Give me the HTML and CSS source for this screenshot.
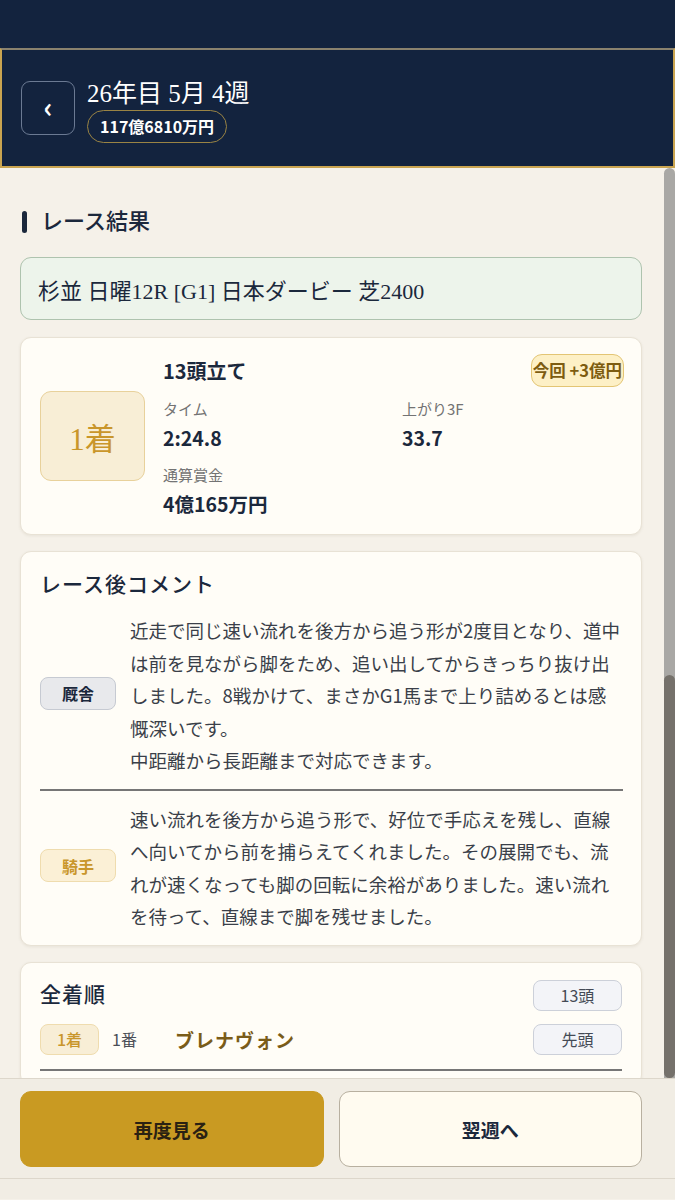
FILE: index.html
```html
<!doctype html>
<html lang="ja">
  <head>
    <meta charset="utf-8">
    <title>レース結果</title>
    <link rel="stylesheet" href="styles.css">
  </head>
  <body>
    <div class="statusbar"></div>

    <header class="topbar">
      <button class="back">‹</button>
      <div class="week">
        <h1>26年目 5月 4週</h1>
        <span class="money">117億6810万円</span>
      </div>
    </header>

    <div class="viewport">
      <main class="scroll">
        <h2 class="section">レース結果</h2>

        <div class="race-name">杉並 日曜12R [G1] 日本ダービー 芝2400</div>

        <section class="card result">
          <div class="rank">1着</div>
          <div class="stats">
            <div class="stats-head">
              <span class="field-size">13頭立て</span>
              <span class="gain">今回 +3億円</span>
            </div>
            <dl class="grid">
              <div><dt>タイム</dt><dd>2:24.8</dd></div>
              <div><dt>上がり3F</dt><dd>33.7</dd></div>
              <div><dt>通算賞金</dt><dd>4億165万円</dd></div>
            </dl>
          </div>
        </section>

        <section class="card comments">
          <h3>レース後コメント</h3>
          <div class="comment">
            <span class="tag stable">厩舎</span>
            <p>近走で同じ速い流れを後方から追う形が2度目となり、道中は前を見ながら脚をため、追い出してからきっちり抜け出しました。8戦かけて、まさかG1馬まで上り詰めるとは感慨深いです。<br>中距離から長距離まで対応できます。</p>
          </div>
          <div class="comment">
            <span class="tag jockey">騎手</span>
            <p>速い流れを後方から追う形で、好位で手応えを残し、直線へ向いてから前を捕らえてくれました。その展開でも、流れが速くなっても脚の回転に余裕がありました。速い流れを待って、直線まで脚を残せました。</p>
          </div>
        </section>

        <section class="card order">
          <div class="order-head">
            <h3>全着順</h3>
            <span class="chip">13頭</span>
          </div>
          <div class="order-row">
            <span class="place">1着</span>
            <span class="num">1番</span>
            <span class="horse">ブレナヴォン</span>
            <span class="chip">先頭</span>
          </div>
        </section>
      </main>
      <div class="scrollbar"><div class="thumb"></div></div>
    </div>

    <footer class="actions">
      <button class="btn primary">再度見る</button>
      <button class="btn">翌週へ</button>
    </footer>
    <div class="home-area"></div>
  </body>
</html>
```

FILE: styles.css
```css
html {
    font-family: "Noto Sans CJK JP", sans-serif;
    color: #1b283c;
    background-color: #f5f1e9;
}

body, h1, h2, h3, p, dl, dd { margin: 0 }

button {
    font: inherit;
    cursor: pointer;
}

.statusbar {
    height: 48px;
    background-color: #13233e;
}

.topbar {
    height: 120px;
    box-sizing: border-box;
    display: flex;
    align-items: center;
    gap: 12px;
    padding: 0 19px;
    background-color: #13233e;
    border: 2px solid #c9a450;
    border-top-color: #8a826e;
}

.back {
    width: 54px;
    height: 54px;
    border: 1px solid #6b7a93;
    border-radius: 9px;
    background: transparent;
    color: #fff;
    font-size: 28px;
    font-weight: 700;
    line-height: 1;
    padding: 0 0 4px;
}

.week {
    display: flex;
    flex-direction: column;
    align-items: flex-start;
    gap: 1px;
    margin-top: 6px;
}

.week h1 {
    font-family: "Liberation Serif", "Noto Sans CJK JP", serif;
    font-weight: 400;
    font-size: 25px;
    line-height: 30px;
    color: #fff;
}

.money {
    height: 33px;
    box-sizing: border-box;
    padding: 0 12px;
    border: 1.5px solid #9a8444;
    border-radius: 17px;
    color: #fff;
    font-size: 16px;
    font-weight: 700;
    line-height: 30px;
}

.viewport {
    height: 910px;
    display: flex;
}

.scroll {
    flex: 1;
    overflow: hidden;
    padding: 0 22px 0 20px;
}

.scrollbar {
    width: 11px;
    display: flex;
    flex-direction: column;
    justify-content: flex-end;
    background-color: #a9a8a5;
    border-radius: 6px 6px 0 0;
}

.thumb {
    height: 403px;
    background-color: #75716b;
    border-radius: 6px;
}

.section {
    display: flex;
    align-items: center;
    gap: 14px;
    margin: 41px 0 22px 2px;
    font-family: "Liberation Serif", "Noto Sans CJK JP", serif;
    font-weight: 500;
    font-size: 22px;
    line-height: 26px;
}

.section::before {
    content: "";
    width: 5px;
    height: 22px;
    border-radius: 3px;
    background-color: #1b283c;
}

.race-name {
    height: 63px;
    box-sizing: border-box;
    display: flex;
    align-items: center;
    padding: 0 17px;
    margin-bottom: 17px;
    background-color: #edf4eb;
    border: 1px solid #aec3ae;
    border-radius: 11px;
    font-family: "Liberation Serif", "Noto Sans CJK JP", serif;
    font-size: 22px;
}

.card {
    background-color: #fffdf7;
    border: 1px solid #e8e2d5;
    border-radius: 11px;
    box-shadow: 0 1px 3px rgba(80, 60, 20, 0.08);
    margin-bottom: 16px;
}

.result {
    display: flex;
    align-items: center;
    gap: 18px;
    padding: 15px 17px 15px 19px;
}

.rank {
    width: 105px;
    height: 90px;
    box-sizing: border-box;
    flex-shrink: 0;
    display: flex;
    align-items: center;
    justify-content: center;
    background-color: #f8eed6;
    border: 1px solid #e8d19b;
    border-radius: 11px;
    color: #c9962b;
    font-family: "Liberation Serif", "Noto Sans CJK JP", serif;
    font-size: 31px;
}

.stats { flex: 1 }

.stats-head {
    height: 34px;
    display: flex;
    align-items: center;
    justify-content: space-between;
}

.field-size {
    font-size: 20px;
    font-weight: 700;
}

.gain {
    height: 33px;
    box-sizing: border-box;
    padding: 0 1px;
    background-color: #fdf0c6;
    border: 1px solid #e3c574;
    border-radius: 11px;
    color: #7d5c10;
    font-size: 16.5px;
    font-weight: 700;
    line-height: 30px;
}

.grid {
    display: grid;
    grid-template-columns: 1fr 1fr;
    column-gap: 17px;
    row-gap: 11px;
    margin-top: 11px;
}

.grid dt {
    color: #737373;
    font-size: 15px;
    line-height: 22px;
}

.grid dd {
    margin-top: 3px;
    font-size: 19.5px;
    font-weight: 700;
    line-height: 30px;
}

.comments {
    padding: 18px 18px 0 19px;
}

.comments h3,
.order h3 {
    font-family: "Liberation Serif", "Noto Sans CJK JP", serif;
    font-weight: 500;
    font-size: 21px;
    line-height: 30px;
    letter-spacing: 1px;
}

.comments h3 { margin-bottom: 2px }

.comment {
    display: flex;
    align-items: center;
    gap: 14px;
    padding: 12px 0;
}

.comment + .comment {
    border-top: 2px solid #767676;
}

.comment p {
    flex: 1;
    color: #3a3f49;
    font-size: 18.5px;
    line-height: 32.5px;
}

.tag {
    width: 76px;
    height: 33px;
    box-sizing: border-box;
    flex-shrink: 0;
    display: flex;
    align-items: center;
    justify-content: center;
    border-radius: 8px;
    font-size: 16px;
    font-weight: 700;
    margin-top: -4px;
}

.stable {
    background-color: #e8e9ec;
    border: 1px solid #c6cad2;
    color: #1b283c;
}

.jockey {
    background-color: #fbf0d6;
    border: 1px solid #efdcae;
    color: #c9962b;
}

.order {
    padding: 17px 19px 14px 19px;
}

.order-head,
.order-row {
    display: flex;
    align-items: center;
}

.order-head {
    justify-content: space-between;
    margin-bottom: 13px;
}

.order-row {
    padding-bottom: 14px;
    border-bottom: 2px solid #767676;
}

.chip {
    width: 89px;
    height: 31px;
    box-sizing: border-box;
    display: flex;
    align-items: center;
    justify-content: center;
    background-color: #f3f4f8;
    border: 1px solid #ccd0d9;
    border-radius: 8px;
    color: #444a55;
    font-size: 16px;
}

.order-row .chip { margin-left: auto }

.place {
    width: 59px;
    height: 31px;
    box-sizing: border-box;
    display: flex;
    align-items: center;
    justify-content: center;
    background-color: #f8eed6;
    border: 1px solid #efdcae;
    border-radius: 8px;
    color: #c9962b;
    font-size: 16px;
    font-weight: 500;
}

.num {
    width: 63px;
    margin-left: 13px;
    color: #4a4e56;
    font-size: 16px;
}

.horse {
    color: #7a5c19;
    font-size: 19px;
    font-weight: 700;
    letter-spacing: 1px;
}

.actions {
    display: flex;
    gap: 15px;
    padding: 12px 33px 11px 20px;
    background-color: #f1ede4;
    border-top: 1px solid #ddd7cb;
    border-bottom: 1px solid #ddd7cb;
}

.btn {
    flex: 1;
    height: 76px;
    border: 1px solid #b8b0a0;
    border-radius: 11px;
    background-color: #fffbf0;
    color: #1b283c;
    font-size: 19px;
    font-weight: 700;
}

.btn.primary {
    background-color: #c99a22;
    border-color: #c99a22;
    color: #2a2112;
}

.home-area {
    height: 20px;
    background-color: #f1ede4;
}
```
